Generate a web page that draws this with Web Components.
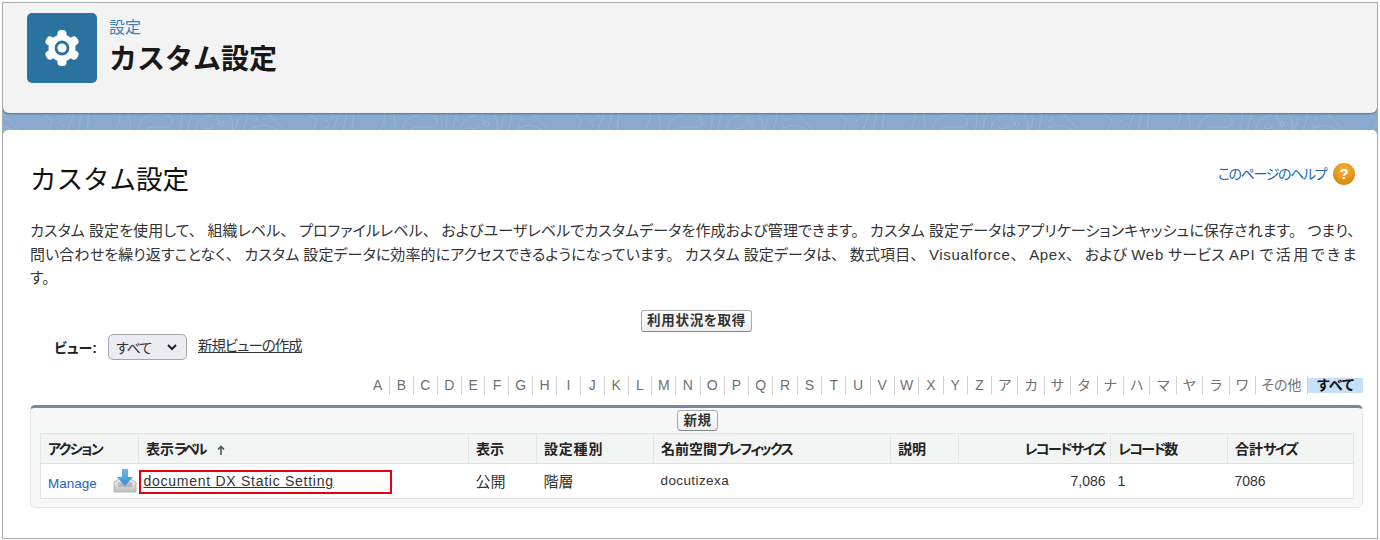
<!DOCTYPE html>
<html lang="ja">
<head>
<meta charset="utf-8">
<title>カスタム設定</title>
<style>
  html, body { margin: 0; background: #fff; }
  body { font-family: "Liberation Sans", "Noto Sans CJK JP", sans-serif; color: #333; font-feature-settings: "palt"; }
</style>
</head>
<body>
<setup-frame>
  <setup-header slot="header" crumb="設定" title-text="カスタム設定"></setup-header>
  <swirl-band slot="band"></swirl-band>
  <setup-page slot="main"></setup-page>
</setup-frame>

<script>
const JP = '"Liberation Sans", "Noto Sans CJK JP", sans-serif';

// 句読点と「カスタム設定」の字間を元の画面に合わせる
function spaced(text) {
    return text
        .replace(/[、。](?!$)/g, '<i class="p">$&</i>')
        .replace(/カスタム設定/g, '<i class="g">カスタム</i>設定')
        .replace(/Visualforce|Apex|Web|API/g, '<i class="l">$&</i>')
        .replace(/で活用できま/, '<i class="t">$&</i>');
}

class SetupFrame extends HTMLElement {
    constructor() {
        super();
        this.attachShadow({ mode: 'open' });
    }

    connectedCallback() {
        this.shadowRoot.innerHTML = `
      <style>
        :host { display: block; width: 1378px; height: 540px; box-sizing: border-box; padding-top: 2px; }
        .box { display: flex; flex-direction: column; box-sizing: border-box; margin-left: 2px; width: 1376px; height: 537px; border: 1px solid #a6a9ad; background: #8aa9cf; overflow: hidden; }
      </style>
      <div class="box">
        <slot name="header"></slot>
        <slot name="band"></slot>
        <slot name="main"></slot>
      </div>
    `;
    }
}

class SetupHeader extends HTMLElement {
    constructor() {
        super();
        this.attachShadow({ mode: 'open' });
    }

    connectedCallback() {
        // 歯車は歯を6本回転させて描く
        let teeth = '';
        for (let i = 0; i < 6; i++) {
            teeth += `<rect x="-4.5" y="-18" width="9" height="10" rx="3.5" transform="rotate(${i * 60})"/>`;
        }
        this.shadowRoot.innerHTML = `
      <style>
        :host { display: block; height: 110px; flex: none; box-sizing: border-box; background: #f3f3f3; border-radius: 0 0 6px 6px; box-shadow: 0 1px 2px rgba(0,0,0,.35); position: relative; z-index: 1; }
        .wrap { display: flex; align-items: flex-start; gap: 12px; padding: 10px 0 0 24px; }
        .tile { width: 70px; height: 70px; border-radius: 5px; background: #2a739e; display: flex; align-items: center; justify-content: center; }
        .crumb { font-size: 16px; line-height: 20px; color: #3b82b8; margin-top: 5px; font-feature-settings: normal; }
        h1 { margin: 5px 0 0; font-size: 28px; line-height: 34px; font-weight: 700; color: #181818; font-feature-settings: normal; }
      </style>
      <div class="wrap">
        <div class="tile">
          <svg width="38" height="38" viewBox="-19 -19 38 38" fill="#fff">
            ${teeth}
            <circle r="13.5"/>
            <circle r="7.4" fill="#2a739e"/>
            <circle r="4.6" fill="#f4f7f9"/>
          </svg>
        </div>
        <div>
          <div class="crumb">${this.getAttribute('crumb')}</div>
          <h1>${this.getAttribute('title-text')}</h1>
        </div>
      </div>
    `;
    }
}

class SwirlBand extends HTMLElement {
    constructor() {
        super();
        this.attachShadow({ mode: 'open' });
    }

    connectedCallback() {
        // 背景の等高線模様を265px周期で繰り返す
        const tile = `
          <path d="M2 0C8 6 13 11 18 17M252 17C258 11 268 11 277 17"/>
          <path d="M45 2L52 7C50 10 50 14 48 17"/>
          <path d="M60 9l3-2M66 5l4-3M62 14l2-2"/>
          <path d="M74 0L68 17M82 0L78 17M89 0L87 17"/>
          <path d="M120 0C120 8 118 14 114 17M128 0C130 6 130 12 130 17"/>
          <path d="M138 17C138 8 146 3 152 2C160 0 170-1 172 8C174 15 165 14 157 14C150 14 147 15 146 17"/>
          <path d="M182 0C182 6 182 12 180 17M192 0C190 6 188 12 188 17"/>
          <path d="M196 17C196 8 204 3 212 2M204 14C206 17 212 16 214 12M216 2C218 6 220 8 218 12"/>
          <ellipse cx="222" cy="11" rx="1.7" ry="3"/>
          <path d="M228 0C232 6 234 12 232 17M238 5C238 10 236 14 233 17M247 0C247 6 245 12 243 17"/>
          <path d="M257 5l-1 3M254 12l-1 3"/>`;
        let tiles = '';
        for (let i = -1; i < 6; i++) {
            tiles += `<g transform="translate(${i * 265 - 3} 0)">${tile}</g>`;
        }
        this.shadowRoot.innerHTML = `
      <style>
        :host { display: block; height: 17px; flex: none; background: #8aa9cf; overflow: hidden; }
        svg { display: block; }
      </style>
      <svg width="1376" height="17" fill="none" stroke="#9eb6d4" stroke-width="1">${tiles}</svg>
    `;
    }
}

class SetupPage extends HTMLElement {
    constructor() {
        super();
        this.attachShadow({ mode: 'open' });
    }

    connectedCallback() {
        const line1 = 'カスタム設定を使用して、組織レベル、プロファイルレベル、およびユーザレベルでカスタムデータを作成および管理できます。カスタム設定データはアプリケーションキャッシュに保存されます。つまり、';
        const line2 = '問い合わせを繰り返すことなく、カスタム設定データに効率的にアクセスできるようになっています。カスタム設定データは、数式項目、Visualforce、Apex、および Web サービス API で活用できま';
        this.shadowRoot.innerHTML = `
      <style>
        :host { display: block; flex: 1; background: #fff; border-radius: 5px 5px 0 0; box-sizing: border-box; padding: 0 14px 0 27px; color: #333; }
        .top { display: flex; justify-content: space-between; align-items: flex-start; padding-top: 32px; height: 57px; box-sizing: content-box; }
        h2 { margin: 0; font-size: 26.5px; line-height: 36px; font-weight: 400; color: #111; font-feature-settings: normal; }
        .help { display: flex; align-items: center; gap: 7px; margin: 1px 8px 0 0; font-size: 14px; letter-spacing: -1.4px; color: #1b64b4; line-height: 22px; }
        .desc { font-size: 15px; line-height: 23.5px; color: #333; width: 1320px; margin: 0; letter-spacing: .1px; }
        .desc span { display: block; white-space: nowrap; }
        .desc i { font-style: normal; }
        .desc .p { margin-right: 11px; }
        .desc .g { margin-right: 4px; }
        .desc .l { letter-spacing: .7px; }
        .desc .t { letter-spacing: 2.4px; }
        .usage { display: flex; justify-content: center; margin-top: 20px; }
        .usage sf-button { font-size: 13.5px; letter-spacing: .7px; padding: 0 5px; }
        .view { display: flex; align-items: center; height: 26px; padding-left: 24px; margin-top: 2px; font-size: 14px; }
        .view b { font-weight: 700; margin-right: 11px; color: #222; }
        .view a { margin: -4px 0 0 11px; color: #333; text-decoration: underline; font-size: 14.5px; letter-spacing: -1px; }
      </style>
      <div class="top">
        <h2>カスタム設定</h2>
        <div class="help">このページのヘルプ<help-dot></help-dot></div>
      </div>
      <p class="desc">
        <span>${spaced(line1)}</span>
        <span>${spaced(line2)}</span>
        <span>す。</span>
      </p>
      <div class="usage"><sf-button>利用状況を取得</sf-button></div>
      <div class="view">
        <b>ビュー:</b>
        <view-select>すべて</view-select>
        <a>新規ビューの作成</a>
      </div>
      <alpha-bar></alpha-bar>
      <list-panel></list-panel>
    `;
    }
}

class HelpDot extends HTMLElement {
    constructor() {
        super();
        this.attachShadow({ mode: 'open' });
    }

    connectedCallback() {
        this.shadowRoot.innerHTML = `
      <style>
        :host { display: block; width: 22px; height: 22px; border-radius: 50%; background: radial-gradient(circle at 50% 30%, #f2b13c, #dc8a12 75%); color: #fff; font: 700 15px/22px ${JP}; letter-spacing: 0; text-align: center; }
      </style>
      ?
    `;
    }
}

class SfButton extends HTMLElement {
    constructor() {
        super();
        this.attachShadow({ mode: 'open' });
    }

    connectedCallback() {
        this.shadowRoot.innerHTML = `
      <style>
        :host { display: inline-block; box-sizing: border-box; height: 22px; padding: 0 5px; border: 1px solid #a8abae; border-bottom-color: #85888b; border-radius: 3px; background: linear-gradient(#fff, #eeeeee); font-size: 13px; line-height: 20px; font-weight: 700; color: #333; letter-spacing: .4px; white-space: nowrap; }
      </style>
      <slot></slot>
    `;
    }
}

class ViewSelect extends HTMLElement {
    constructor() {
        super();
        this.attachShadow({ mode: 'open' });
    }

    connectedCallback() {
        this.shadowRoot.innerHTML = `
      <style>
        :host { display: flex; align-items: center; justify-content: space-between; box-sizing: border-box; width: 79px; height: 26px; padding: 0 9px 0 7px; border: 1px solid #a3a5ab; border-radius: 5px; background: #ebebf1; font-size: 14px; letter-spacing: -1px; color: #333; }
        svg { display: block; margin-top: 2px; }
      </style>
      <slot></slot>
      <svg width="10" height="7" viewBox="0 0 10 7" fill="none" stroke="#222" stroke-width="2"><path d="M1 1l4 4 4-4"/></svg>
    `;
    }
}

class AlphaBar extends HTMLElement {
    constructor() {
        super();
        this.attachShadow({ mode: 'open' });
    }

    connectedCallback() {
        const letters = 'A B C D E F G H I J K L M N O P Q R S T U V W X Y Z'.split(' ');
        const kana = 'ア カ サ タ ナ ハ マ ヤ ラ ワ'.split(' ');
        const items = letters.map((l, i) => `<span class="${i < 13 ? 'early' : ''}">${l}</span>`).join('')
            + kana.map(l => `<span class="kana">${l}</span>`).join('');
        this.shadowRoot.innerHTML = `
      <style>
        :host { display: flex; justify-content: flex-end; align-items: center; height: 19px; margin-top: 16px; font-size: 14px; color: #707070; font-feature-settings: normal; }
        span { display: block; box-sizing: border-box; width: 24.3px; text-align: center; line-height: 19px; border-right: 1px solid #d4d4d4; white-space: nowrap; }
        .early { width: 23.85px; }
        .kana { width: 26.4px; }
        .other { width: 52px; font-feature-settings: "palt"; }
        .all { border: 0; width: 55px; background: #c5e0fb; color: #111; font-weight: 700; line-height: 15px; font-feature-settings: "palt"; }
      </style>
      ${items}<span class="other">その他</span><span class="all">すべて</span>
    `;
    }
}

class ListPanel extends HTMLElement {
    constructor() {
        super();
        this.attachShadow({ mode: 'open' });
    }

    connectedCallback() {
        this.shadowRoot.innerHTML = `
      <style>
        :host { display: block; box-sizing: border-box; height: 103px; margin-top: 10px; padding: 0 9px; border: 1px solid #e3e5e5; border-top: 3px solid #7c86a3; border-radius: 5px; background: #f6f7f7; }
        .bar { display: flex; justify-content: center; align-items: center; height: 25px; padding: 1px 0 0 2px; box-sizing: border-box; }
        .bar sf-button { height: 21px; line-height: 19px; padding: 0 6px; border-radius: 4px; font-size: 13.5px; }
        table { border-collapse: collapse; table-layout: fixed; width: 1313px; background: #fff; font-size: 15px; border: 1px solid #e3e5e5; }
        th { height: 30px; box-sizing: border-box; padding: 0 7px; text-align: left; background: #f2f3f3; border-right: 1px solid #e3e5e5; border-bottom: 1px solid #dfe1e1; font-size: 14px; font-weight: 700; color: #222; white-space: nowrap; }
        th:last-child, td:last-child { border-right: 0; }
        th .k { letter-spacing: -1.6px; }
        th .k3 { letter-spacing: -3.4px; }
        th .w { letter-spacing: .8px; }
        td { height: 34px; box-sizing: border-box; padding: 0 7px; color: #333; white-space: nowrap; }
        .num { text-align: right; padding-right: 5px; }
        .act { display: flex; align-items: center; justify-content: space-between; height: 34px; }
        .manage { color: #1b64b4; font-size: 13.5px; margin-top: 6px; }
        .sort { display: inline-block; margin-left: 13px; vertical-align: -1px; }
        .lbl { position: relative; padding-left: 5px; letter-spacing: .73px; font-size: 14px; }
        .lbl u { text-decoration: underline; }
        .mark { position: absolute; left: 0; top: 6px; width: 253px; height: 24px; box-sizing: border-box; border: 2px solid #e60012; }
        .dim { letter-spacing: .4px; font-size: 13.5px; }
        .val { font-size: 14px; }
      </style>
      <div class="bar"><sf-button>新規</sf-button></div>
      <table>
        <colgroup>
          <col style="width:98px"><col style="width:330px"><col style="width:68px"><col style="width:117px"><col style="width:237px"><col style="width:68px"><col style="width:152px"><col style="width:117px"><col style="width:126px">
        </colgroup>
        <tr>
          <th><span class="k">アクション</span></th>
          <th>表示<span class="k3">ラベル</span><svg class="sort" width="8" height="10" viewBox="0 0 8 10" fill="none" stroke="#555" stroke-width="1.6"><path d="M4 10V2M1 4.5L4 1.5l3 3"/></svg></th>
          <th>表示</th>
          <th><span class="w">設定種別</span></th>
          <th>名前空間<span class="k">プレフィックス</span></th>
          <th>説明</th>
          <th class="num"><span class="k">レコードサイズ</span></th>
          <th><span class="k">レコード</span>数</th>
          <th>合計<span class="k">サイズ</span></th>
        </tr>
        <tr>
          <td>
            <div class="act"><span class="manage">Manage</span><download-icon></download-icon></div>
          </td>
          <td class="lbl"><u>document DX Static Setting</u><span class="mark"></span></td>
          <td>公開</td><td>階層</td><td class="dim">docutizexa</td><td></td><td class="num val">7,086</td><td class="val">1</td><td class="val">7086</td>
        </tr>
      </table>
    `;
    }
}

class DownloadIcon extends HTMLElement {
    constructor() {
        super();
        this.attachShadow({ mode: 'open' });
    }

    connectedCallback() {
        this.shadowRoot.innerHTML = `
      <style>
        :host { display: block; width: 24px; height: 24px; margin: 0 -5px 0 0; }
        svg { display: block; }
      </style>
      <svg width="24" height="24" viewBox="0 0 24 24">
        <defs>
          <linearGradient id="tray" x1="0" y1="0" x2="0" y2="1"><stop offset="0" stop-color="#f2f2f2"/><stop offset="1" stop-color="#bdbdbd"/></linearGradient>
          <linearGradient id="arr" x1="0" y1="0" x2="0" y2="1"><stop offset="0" stop-color="#6db7e6"/><stop offset="1" stop-color="#3a8fcf"/></linearGradient>
        </defs>
        <path d="M1 13l6-3h10l6 3v10H1z" fill="url(#tray)" stroke="#b5b5b5"/>
        <path d="M5 13h14v5H5z" fill="#8f9397" opacity=".45"/>
        <path d="M9 0h6v8h5l-8 9-8-9h5z" fill="url(#arr)"/>
      </svg>
    `;
    }
}

customElements.define('setup-frame', SetupFrame);
customElements.define('setup-header', SetupHeader);
customElements.define('swirl-band', SwirlBand);
customElements.define('setup-page', SetupPage);
customElements.define('help-dot', HelpDot);
customElements.define('sf-button', SfButton);
customElements.define('view-select', ViewSelect);
customElements.define('alpha-bar', AlphaBar);
customElements.define('list-panel', ListPanel);
customElements.define('download-icon', DownloadIcon);
</script>
</body>
</html>
